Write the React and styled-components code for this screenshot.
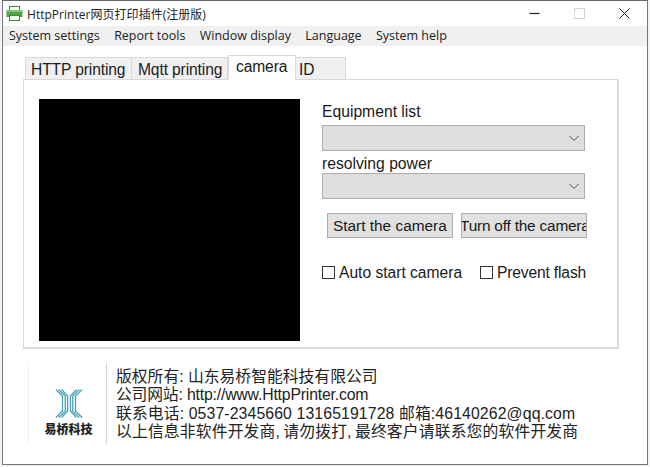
import React from "react";
import styled, { createGlobalStyle } from "styled-components";

const Global = createGlobalStyle`
  html, body { margin: 0; padding: 0; background: #f4f4f4; }
  * { box-sizing: border-box; }
`;

const Screen = styled.div`
  width: 650px;
  height: 467px;
  overflow: hidden;
  padding-left: 2px;
`;

const Win = styled.div`
  width: 646px;
  height: 465px;
  background: #fff;
  border: 1px solid #777;
  border-top-color: #666;
  font-family: "Liberation Sans", "Noto Sans CJK SC", sans-serif;
  color: #1a1a1a;
  display: flex;
  flex-direction: column;
`;

const TitleBar = styled.div`
  height: 25px;
  display: flex;
  align-items: center;
  padding-left: 3px;
`;

const Title = styled.span`
  font-family: "Open Sans", "Noto Sans CJK SC", sans-serif;
  font-size: 12px;
  margin-left: 4px;
  letter-spacing: 0.03px;
  color: #222;
  flex: 1;
`;

const WinButtons = styled.div`
  display: flex;
  align-items: center;
  gap: 34px;
  margin-right: 17px;
`;

const MenuBar = styled.div`
  height: 20px;
  background: #f0f0f0;
  display: flex;
  align-items: center;
  padding: 0 0 2px 6px;
  gap: 14.3px;
  font-family: "Open Sans", sans-serif;
  font-size: 12.5px;
  color: #222;
`;

const Body = styled.div`
  padding: 8px 0 0 20px;
`;

const Tabs = styled.div`
  display: flex;
  align-items: flex-end;
  height: 25px;
  margin-left: 2px;
`;

const Tab = styled.div`
  height: ${(p) => (p.$active ? "25px" : "23px")};
  width: ${(p) => p.$w}px;
  background: ${(p) => (p.$active ? "#fff" : "#f0f0f0")};
  border: 1px solid #d9d9d9;
  border-bottom: ${(p) => (p.$active ? "1px solid #fff" : "1px solid #d9d9d9")};
  border-left-width: ${(p) => (p.$first || p.$active ? "1px" : "0")};
  font-size: 15.6px;
  letter-spacing: -0.12px;
  line-height: ${(p) => (p.$active ? "22px" : "23px")};
  padding-left: ${(p) => p.$pad}px;
  white-space: nowrap;
  overflow: hidden;
  margin-bottom: -1px;
  position: relative;
  z-index: ${(p) => (p.$active ? 1 : 0)};
`;

const Panel = styled.div`
  width: 596px;
  height: 270px;
  border: 1px solid #d9d9d9;
  border-right-width: 2px;
  border-bottom-width: 2px;
  padding: 19px 0 0 15px;
  display: flex;
  gap: 22px;
`;

const Preview = styled.div`
  width: 261px;
  height: 242px;
  background: #000;
`;

const Controls = styled.div`
  width: 266px;
  display: flex;
  flex-direction: column;
`;

const FieldLabel = styled.div`
  font-size: 15.7px;
  line-height: 19px;
  height: ${(p) => p.$h}px;
  padding-top: ${(p) => p.$top}px;
`;

const Select = styled.div`
  width: 263px;
  height: 26px;
  background: #dedede;
  border: 1px solid #adadad;
  display: flex;
  align-items: center;
  justify-content: flex-end;
  padding-right: 4px;
`;

const ButtonRow = styled.div`
  display: flex;
  gap: 8px;
  margin: 14px 0 0 5px;
`;

const Btn = styled.div`
  width: 126px;
  height: 25px;
  background: #e1e1e1;
  border: 1px solid #adadad;
  font-size: 15.4px;
  letter-spacing: ${(p) => p.$track || 0}px;
  line-height: 23px;
  white-space: nowrap;
  overflow: hidden;
  padding-left: ${(p) => p.$pad}px;
  text-indent: ${(p) => p.$indent || 0}px;
`;

const CheckRow = styled.div`
  display: flex;
  margin-top: 25px;
  font-size: 15.6px;
  line-height: 19px;
`;

const CheckItem = styled.div`
  display: flex;
  align-items: center;
  gap: 4px;
  width: ${(p) => p.$w}px;
  letter-spacing: ${(p) => p.$track || 0}px;
  white-space: nowrap;
`;

const Box = styled.span`
  flex: none;
  width: 13px;
  height: 13px;
  background: #fff;
  border: 1px solid #333;
`;

const Footer = styled.div`
  display: flex;
  margin: 14px 0 0 5px;
`;

const LogoCell = styled.div`
  width: 79px;
  height: 81px;
  border-left: 1px solid #f0f0f0;
  border-right: 1px solid #d4d4d4;
  display: flex;
  flex-direction: column;
  align-items: center;
  justify-content: flex-end;
  padding: 0 0 8px 2px;
`;

const LogoText = styled.div`
  font-family: "Noto Sans CJK SC", sans-serif;
  font-size: 12px;
  font-weight: 900;
  line-height: 14px;
  margin-top: 3px;
  color: #222;
`;

const Info = styled.div`
  margin: 4.5px 0 0 9px;
  font-size: 15.8px;
  line-height: 18.5px;
  white-space: nowrap;
  color: #222;
`;

const InfoLine = styled.div`
  letter-spacing: ${(p) => p.$track || 0}px;
`;

const Chevron = () => (
  <svg width="12" height="12" viewBox="0 0 12 12" fill="none" stroke="#555" strokeWidth="1">
    <path d="M1.5 4 L6 8.5 L10.5 4" />
  </svg>
);

const PrinterIcon = () => (
  <svg width="17" height="15" viewBox="0 0 17 15">
    <rect x="3.5" y="0.5" width="10" height="5" fill="#fff" stroke="#3f8a3a" strokeWidth="1" />
    <rect x="0.5" y="4" width="16" height="7" fill="#4fa544" />
    <rect x="1" y="4" width="15" height="2" fill="#86c874" />
    <rect x="3.5" y="9.5" width="10" height="5" fill="#f6f6f6" stroke="#3f8a3a" strokeWidth="1" />
  </svg>
);

const LogoMark = () => (
  <svg width="28" height="31" viewBox="0 0 30 32" fill="none" stroke="#4aa3b8" strokeWidth="1.4">
    <path d="M1 1 L8 8 V24 L1 31" />
    <path d="M4 1 L11 8 V24 L4 31" />
    <path d="M7 1 L13.5 8 V24 L7 31" />
    <path d="M29 1 L22 8 V24 L29 31" />
    <path d="M26 1 L19 8 V24 L26 31" />
    <path d="M23 1 L16.5 8 V24 L23 31" />
  </svg>
);

export default function App() {
  return (
    <Screen>
      <Global />
      <Win>
        <TitleBar>
          <PrinterIcon />
          <Title>HttpPrinter网页打印插件(注册版)</Title>
          <WinButtons>
            <svg width="11" height="11" viewBox="0 0 11 11" stroke="#222" strokeWidth="1.2">
              <path d="M0.5 5.5 H10.5" />
            </svg>
            <svg width="11" height="11" viewBox="0 0 11 11" fill="none" stroke="#d4d4d4">
              <rect x="0.5" y="0.5" width="10" height="10" />
            </svg>
            <svg width="11" height="11" viewBox="0 0 11 11" stroke="#222">
              <path d="M0.5 0.5 L10.5 10.5 M10.5 0.5 L0.5 10.5" />
            </svg>
          </WinButtons>
        </TitleBar>
        <MenuBar>
          <span>System settings</span>
          <span>Report tools</span>
          <span>Window display</span>
          <span>Language</span>
          <span>System help</span>
        </MenuBar>
        <Body>
          <Tabs>
            <Tab $first $w={107} $pad={5}>HTTP printing</Tab>
            <Tab $w={96} $pad={6}>Mqtt printing</Tab>
            <Tab $active $w={68} $pad={7}>camera</Tab>
            <Tab $w={50} $pad={3}>ID</Tab>
          </Tabs>
          <Panel>
            <Preview />
            <Controls>
              <FieldLabel $h={26} $top={3}>Equipment list</FieldLabel>
              <Select><Chevron /></Select>
              <FieldLabel $h={22} $top={3}>resolving power</FieldLabel>
              <Select><Chevron /></Select>
              <ButtonRow>
                <Btn $pad={5}>Start the camera</Btn>
                <Btn $pad={0} $indent={-2} $track={-0.2}>Turn off the camera</Btn>
              </ButtonRow>
              <CheckRow>
                <CheckItem $w={158}><Box />Auto start camera</CheckItem>
                <CheckItem $w={108} $track={-0.15}><Box />Prevent flash</CheckItem>
              </CheckRow>
            </Controls>
          </Panel>
          <Footer>
            <LogoCell>
              <LogoMark />
              <LogoText>易桥科技</LogoText>
            </LogoCell>
            <Info>
              <InfoLine>版权所有: 山东易桥智能科技有限公司</InfoLine>
              <InfoLine $track={-0.18}>公司网站: http://www.HttpPrinter.com</InfoLine>
              <InfoLine $track={0.12}>联系电话: 0537-2345660 13165191728 邮箱:46140262@qq.com</InfoLine>
              <InfoLine $track={0.15}>以上信息非软件开发商,&#8201;请勿拨打,&#8201;最终客户请联系您的软件开发商</InfoLine>
            </Info>
          </Footer>
        </Body>
      </Win>
    </Screen>
  );
}
